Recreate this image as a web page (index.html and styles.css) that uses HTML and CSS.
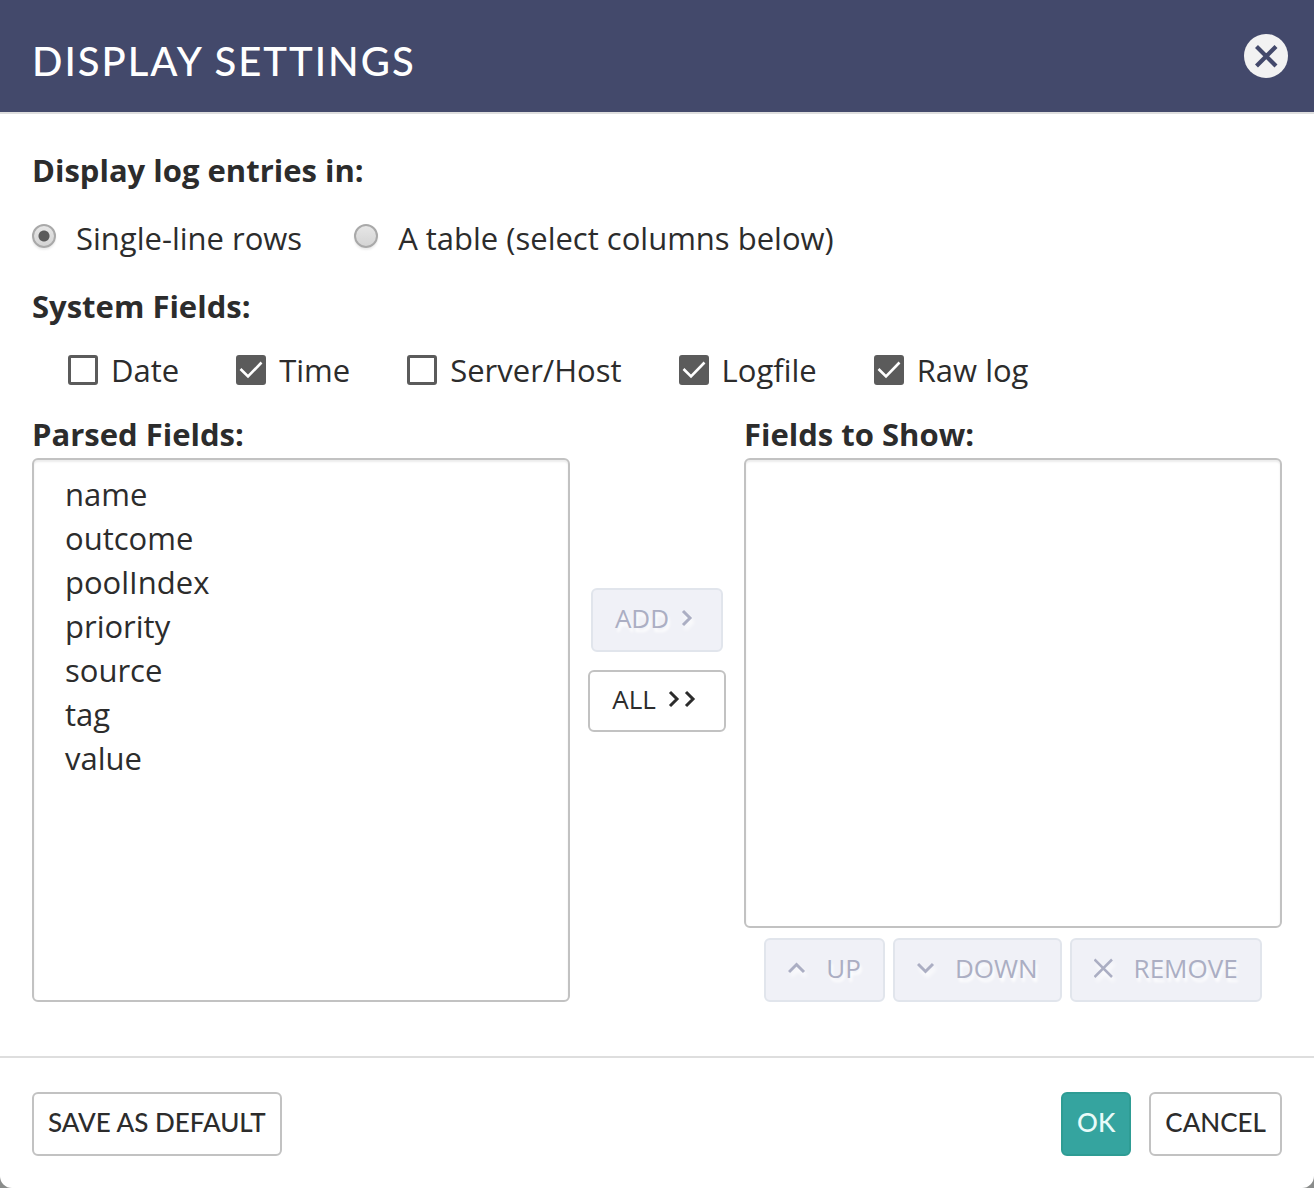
FILE: index.html
```html
<!DOCTYPE html>
<html lang="en">
<head>
<meta charset="utf-8">
<meta name="viewport" content="width=device-width, initial-scale=1">
<title>Display Settings</title>
<link rel="stylesheet" href="styles.css">
</head>
<body>
<form class="dialog" aria-labelledby="dialog-title">
  <header class="dialog-header">
    <h1 class="dialog-title" id="dialog-title">DISPLAY SETTINGS</h1>
    <button class="close" type="button" aria-label="Close">
      <svg viewBox="0 0 44 44" width="44" height="44" aria-hidden="true">
        <circle cx="22" cy="22" r="22" fill="#f2f2f2"/>
        <path d="M12.5 12.5 32 32M32 12.5 12.500 32" stroke="#43496b" stroke-width="4.2"/>
      </svg>
    </button>
  </header>

  <main class="dialog-body">
    <fieldset class="group">
      <legend class="heading">Display log entries in:</legend>
      <div class="radio-row">
        <label class="choice radio-choice"><input class="radio" type="radio" name="layout" checked>Single-line rows</label>
        <label class="choice radio-choice"><input class="radio" type="radio" name="layout">A table (select columns below)</label>
      </div>
    </fieldset>

    <fieldset class="group">
      <legend class="heading">System Fields:</legend>
      <div class="check-row">
        <label class="choice check-choice"><span class="box"><input class="check" type="checkbox"></span>Date</label>
        <label class="choice check-choice"><span class="box"><input class="check" type="checkbox" checked><svg class="tick" viewBox="0 0 30 30" aria-hidden="true"><path d="M4.500 14 12 21.500 25.500 7.500"/></svg></span>Time</label>
        <label class="choice check-choice"><span class="box"><input class="check" type="checkbox"></span>Server/Host</label>
        <label class="choice check-choice"><span class="box"><input class="check" type="checkbox" checked><svg class="tick" viewBox="0 0 30 30" aria-hidden="true"><path d="M4.500 14 12 21.500 25.500 7.500"/></svg></span>Logfile</label>
        <label class="choice check-choice"><span class="box"><input class="check" type="checkbox" checked><svg class="tick" viewBox="0 0 30 30" aria-hidden="true"><path d="M4.500 14 12 21.500 25.500 7.500"/></svg></span>Raw log</label>
      </div>
    </fieldset>

    <div class="picker">
      <div class="column">
        <label class="heading" for="parsed">Parsed Fields:</label>
        <select class="list" id="parsed" multiple>
          <option>name</option>
          <option>outcome</option>
          <option>poolIndex</option>
          <option>priority</option>
          <option>source</option>
          <option>tag</option>
          <option>value</option>
        </select>
      </div>

      <div class="transfer">
        <button class="button small add" type="button" disabled>ADD
          <svg class="icon" viewBox="0 0 12 18" width="12" height="18" aria-hidden="true"><path d="M2 2 9 9 2 16"/></svg>
        </button>
        <button class="button small all" type="button">ALL
          <svg class="icon" viewBox="0 0 28 18" width="28" height="18" aria-hidden="true"><path d="M2 2 9 9 2 16M18 2 25 9 18 16"/></svg>
        </button>
      </div>

      <div class="column">
        <label class="heading" for="shown">Fields to Show:</label>
        <select class="list" id="shown" multiple></select>
        <div class="order">
          <button class="button small" type="button" disabled>
            <svg class="icon" viewBox="0 0 18 12" width="18" height="12" aria-hidden="true"><path d="M1 10 8.500 2.500 16 10"/></svg>UP</button>
          <button class="button small" type="button" disabled>
            <svg class="icon" viewBox="0 0 18 12" width="18" height="12" aria-hidden="true"><path d="M1 2 8.500 9.500 16 2"/></svg>DOWN</button>
          <button class="button small" type="button" disabled>
            <svg class="icon thin" viewBox="0 0 20 20" width="20" height="20" aria-hidden="true"><path d="M0.500 1.500 18 19M18 1.500 0.500 19"/></svg>REMOVE</button>
        </div>
      </div>
    </div>
  </main>

  <footer class="dialog-footer">
    <button class="button" type="button">SAVE AS DEFAULT</button>
    <div class="actions">
      <button class="button primary" type="submit">OK</button>
      <button class="button" type="button">CANCEL</button>
    </div>
  </footer>
</form>
</body>
</html>
```
FILE: styles.css
```css
* {
  box-sizing: border-box;
}

html {
  padding-right: 2px;
  background: #fff;
}

body {
  margin: 0;
  background: #8a8c8b;
  color: #2c2c2c;
  font-family: "Open Sans", sans-serif;
  font-size: 31px;
  line-height: 44px;
}

.dialog {
  display: flex;
  flex-direction: column;
  min-height: 100vh;
  background: #fff;
  border-radius: 0 0 12px 12px;
}

.dialog-header {
  display: flex;
  align-items: center;
  justify-content: space-between;
  padding: 29px 26px;
  background: #43496b;
  border-bottom: 2px solid #dedede;
}

.dialog-title {
  margin: 0;
  padding-top: 10px;
  color: #fff;
  font-family: Lato, sans-serif;
  font-size: 40px;
  font-weight: 500;
  line-height: 44px;
  letter-spacing: 2px;
  margin-left: 6px;
}

.close {
  display: flex;
  padding: 0;
  border: 0;
  background: none;
}

.dialog-body {
  flex: 1;
  padding: 34px 32px 52px;
}

.group {
  margin: 0;
  padding: 0;
  border: 0;
}

.heading {
  padding: 0;
  font-weight: 700;
}

.choice {
  display: flex;
  align-items: center;
}

.radio-row {
  display: flex;
  gap: 52px;
  padding: 24px 0;
}

.radio-choice {
  gap: 20px;
}

.radio {
  appearance: none;
  width: 24px;
  height: 24px;
  margin: 0 0 4px;
  border: 2px solid #a9a9a9;
  border-radius: 50%;
  background: linear-gradient(#e6e6e6, #d4d4d4);
  box-shadow: 0 2px 2px #ececec;
}

.radio:checked {
  background: radial-gradient(circle, #5b5b5b 5px, transparent 6px), linear-gradient(#e6e6e6, #d4d4d4);
}

.check-row {
  display: flex;
  gap: 57px;
  padding: 20px 36px;
}

.check-choice {
  gap: 13px;
}

.box {
  display: grid;
  width: 30px;
  height: 30px;
}

.check,
.tick {
  grid-area: 1 / 1;
  width: 30px;
  height: 30px;
}

.check {
  appearance: none;
  margin: 0;
  border: 3px solid #5b5b5b;
  border-radius: 3px;
  background: #fff;
}

.check:checked {
  background: #5b5b5b;
}

.tick {
  fill: none;
  stroke: #fff;
  stroke-width: 2.6;
  pointer-events: none;
}

.picker {
  display: grid;
  grid-template-columns: 1fr 138px 1fr;
  column-gap: 18px;
  height: 590px;
}

.column {
  display: flex;
  flex-direction: column;
}

.list {
  flex: 1;
  width: 100%;
  min-height: 0;
  margin-top: 2px;
  padding: 13px 0;
  border: 2px solid #c2c2c2;
  border-radius: 6px;
  background: #fff;
  box-shadow: inset 0 2px 2px #ececec;
  color: inherit;
  font: inherit;
  overflow: auto;
}

.list option {
  min-height: 44px;
  padding: 0 31px;
  line-height: 44px;
}

.transfer {
  display: flex;
  flex-direction: column;
  align-items: center;
  gap: 18px;
  padding-top: 176px;
}

.order {
  display: flex;
  justify-content: center;
  gap: 8px;
  padding-top: 10px;
}

.button {
  display: flex;
  align-items: center;
  justify-content: center;
  height: 64px;
  padding: 0 14px 4px;
  border: 2px solid #c2c2c2;
  border-radius: 6px;
  background: #fff;
  color: #2c2c2c;
  font-family: Lato, sans-serif;
  font-size: 26px;
  font-weight: 500;
  line-height: 40px;
  white-space: nowrap;
}

.small {
  gap: 20px;
  padding: 0 22px 4px;
  font-family: "Open Sans", sans-serif;
  font-weight: 400;
}

.add,
.all {
  gap: 12px;
  padding-right: 28px;
}

.all {
  height: 62px;
}

.button:disabled {
  border-color: #e1e5ec;
  background: #f0f1f7;
  color: #abaec3;
  text-shadow: 2px 4px 3px #fff;
}

.button:disabled .icon {
  filter: drop-shadow(2px 4px 2px #fff);
}

.icon {
  fill: none;
  stroke: currentColor;
  stroke-width: 3;
}

.icon.thin {
  stroke-width: 2.5;
}

.primary {
  border-color: #2e9c94;
  background: #35a49f;
  color: #e9fbf9;
}

.dialog-footer {
  display: flex;
  justify-content: space-between;
  padding: 34px 32px 32px;
  border-top: 2px solid #dedede;
}

.actions {
  display: flex;
  gap: 18px;
}
```
